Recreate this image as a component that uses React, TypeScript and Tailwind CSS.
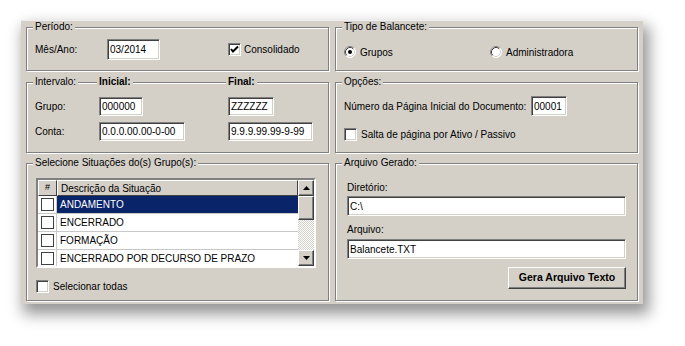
import React from "react";

const BG = "bg-[#d4d0c8]";

function GroupBox({
  label,
  className = "",
  children,
  extra,
}: {
  label: string;
  className?: string;
  children?: React.ReactNode;
  extra?: React.ReactNode;
}) {
  return (
    <div
      className={`relative border border-[#808080] shadow-[inset_1px_1px_0_#fff,1px_1px_0_#fff] ${className}`}
    >
      <span className="absolute left-[6px] top-[-7px] bg-[#d4d0c8] px-[2px] leading-[12px] whitespace-nowrap">
        {label}
      </span>
      {extra}
      {children}
    </div>
  );
}

function Field({ value, className = "" }: { value: string; className?: string }) {
  return (
    <div
      className={`bg-white border border-[#808080] border-b-white border-r-white shadow-[inset_1px_1px_0_#404040,inset_-1px_-1px_0_#d4d0c8] pl-[2px] flex items-center whitespace-nowrap overflow-hidden ${className}`}
    >
      {value}
    </div>
  );
}

function Check({ checked = false, flat = false }: { checked?: boolean; flat?: boolean }) {
  return (
    <div
      className={
        flat
          ? "w-[13px] h-[13px] bg-white border border-[#404040] shrink-0"
          : "w-[13px] h-[13px] bg-white border border-[#808080] border-b-white border-r-white shadow-[inset_1px_1px_0_#404040,inset_-1px_-1px_0_#d4d0c8] shrink-0 flex items-center justify-center"
      }
    >
      {checked && (
        <svg width="11" height="11" viewBox="0 0 11 11">
          <polyline points="2,5 4,7.5 9,2.5" fill="none" stroke="#000" strokeWidth="2" />
        </svg>
      )}
    </div>
  );
}

function Radio({ checked = false }: { checked?: boolean }) {
  return (
    <svg width="12" height="12" viewBox="0 0 12 12" className="shrink-0">
      <circle cx="6" cy="6" r="5.5" fill="#fff" />
      <path d="M2.11 9.89 A5.5 5.5 0 0 1 9.89 2.11" fill="none" stroke="#808080" strokeWidth="1" />
      <path d="M9.89 2.11 A5.5 5.5 0 0 1 2.11 9.89" fill="none" stroke="#fff" strokeWidth="1" />
      <path d="M2.82 9.18 A4.5 4.5 0 0 1 9.18 2.82" fill="none" stroke="#404040" strokeWidth="1" />
      <path d="M9.18 2.82 A4.5 4.5 0 0 1 2.82 9.18" fill="none" stroke="#d4d0c8" strokeWidth="1" />
      {checked && <circle cx="6" cy="6" r="2" fill="#000" />}
    </svg>
  );
}

function ScrollBtn({ up }: { up: boolean }) {
  return (
    <div className="w-[16px] h-[16px] bg-[#d4d0c8] border border-t-white border-l-white border-r-[#404040] border-b-[#404040] shadow-[inset_-1px_-1px_0_#808080] flex items-center justify-center shrink-0">
      <svg width="7" height="4" viewBox="0 0 7 4">
        {up ? <polygon points="3.5,0 7,4 0,4" fill="#000" /> : <polygon points="0,0 7,0 3.5,4" fill="#000" />}
      </svg>
    </div>
  );
}

const rows = ["ANDAMENTO", "ENCERRADO", "FORMAÇÃO", "ENCERRADO POR DECURSO DE PRAZO"];

export default function App() {
  return (
    <div className="w-[685px] h-[346px] bg-white pt-[20px] pl-[21px] font-['Liberation_Sans',Arial,sans-serif] text-[10px] text-black">
      <div
        className={`w-[622px] h-[284px] ${BG} shadow-[4px_8px_14px_2px_rgba(0,0,0,0.42)] border-t border-t-[#eeeeee] px-[5px] pt-[6px] grid grid-cols-[303px_303px] gap-x-[6px] content-start`}
      >
        {/* Row 1 */}
        <GroupBox label="Período:" className="h-[44px]">
          <div className="flex items-center h-[21px] mt-[11px] pl-[8px]">
            <span className="w-[72px]">Mês/Ano:</span>
            <Field value="03/2014" className="w-[53px] h-[21px]" />
            <div className="ml-[68px] flex items-center">
              <Check checked />
              <span className="ml-[3px]">Consolidado</span>
            </div>
          </div>
        </GroupBox>
        <GroupBox label="Tipo de Balancete:" className="h-[44px]">
          <div className="flex items-center h-[14px] mt-[17px] pl-[8px]">
            <div className="flex items-center w-[146px]">
              <Radio checked />
              <span className="ml-[4px]">Grupos</span>
            </div>
            <div className="flex items-center">
              <Radio />
              <span className="ml-[4px]">Administradora</span>
            </div>
          </div>
        </GroupBox>

        {/* Row 2 */}
        <GroupBox
          label="Intervalo:"
          className="h-[71px] mt-[11px]"
          extra={
            <>
              <span className="absolute left-[70px] top-[-7px] bg-[#d4d0c8] px-[2px] leading-[12px] font-bold">
                Inicial:
              </span>
              <span className="absolute left-[199px] top-[-7px] bg-[#d4d0c8] px-[2px] leading-[12px] font-bold">
                Final:
              </span>
            </>
          }
        >
          <div className="grid grid-cols-[64px_129px_1fr] gap-y-[6px] items-center mt-[14px] pl-[8px]">
            <span>Grupo:</span>
            <Field value="000000" className="w-[44px] h-[19px]" />
            <Field value="ZZZZZZ" className="w-[46px] h-[19px]" />
            <span>Conta:</span>
            <Field value="0.0.0.00.00-0-00" className="w-[86px] h-[19px]" />
            <Field value="9.9.9.99.99-9-99" className="w-[85px] h-[19px]" />
          </div>
        </GroupBox>
        <GroupBox label="Opções:" className="h-[71px] mt-[11px]">
          <div className="flex items-center mt-[13px] pl-[8px] h-[20px]">
            <span className="w-[187px] whitespace-nowrap">Número da Página Inicial do Documento:</span>
            <Field value="00001" className="w-[36px] h-[20px]" />
          </div>
          <div className="flex items-center mt-[12px] pl-[8px] h-[13px]">
            <Check />
            <span className="ml-[4px]">Salta de página por Ativo / Passivo</span>
          </div>
        </GroupBox>

        {/* Row 3 */}
        <GroupBox label="Selecione Situações do(s) Grupo(s):" className="h-[138px] mt-[10px]">
          <div className="mt-[14px] ml-[9px] w-[280px] h-[90px] border-2 border-t-[#808080] border-l-[#808080] border-b-white border-r-white shadow-[inset_1px_1px_0_#404040] flex overflow-hidden">
            <div className="flex-1 flex flex-col bg-white overflow-hidden">
              <div className="flex h-[16px] shrink-0 bg-[#d4d0c8]">
                <div className="w-[19px] flex items-center justify-center border border-t-white border-l-white border-r-[#404040] border-b-[#404040] text-[9px]">
                  #
                </div>
                <div className="flex-1 flex items-center pl-[3px] border border-t-white border-l-white border-r-[#404040] border-b-[#404040]">
                  Descrição da Situação
                </div>
              </div>
              {rows.map((r, i) => (
                <div key={r} className="flex h-[18px] shrink-0 border-b border-[#c8c8c8]">
                  <div className="w-[19px] flex items-center justify-center border-r border-[#c8c8c8] bg-white">
                    <Check flat />
                  </div>
                  <div
                    className={
                      i === 0
                        ? "flex-1 flex items-center pl-[3px] bg-[#0a246a] text-white"
                        : "flex-1 flex items-center pl-[3px]"
                    }
                  >
                    {r}
                  </div>
                </div>
              ))}
            </div>
            <div className="w-[16px] flex flex-col">
              <ScrollBtn up />
              <div className="h-[24px] shrink-0 bg-[#d4d0c8] border border-t-white border-l-white border-r-[#404040] border-b-[#404040] shadow-[inset_-1px_-1px_0_#808080]" />
              <div className="flex-1 bg-[repeating-conic-gradient(#ffffff_0_25%,#d4d0c8_0_50%)] bg-[length:2px_2px]" />
              <ScrollBtn up={false} />
            </div>
          </div>
          <div className="flex items-center mt-[12px] ml-[9px] h-[13px]">
            <Check />
            <span className="ml-[4px]">Selecionar todas</span>
          </div>
        </GroupBox>
        <GroupBox label="Arquivo Gerado:" className="h-[138px] mt-[10px]">
          <div className="flex flex-col pl-[11px] pr-[11px]">
            <span className="mt-[18px] leading-[12px]">Diretório:</span>
            <Field value="C:\" className="mt-[2px] h-[20px] w-full" />
            <span className="mt-[8px] leading-[12px]">Arquivo:</span>
            <Field value="Balancete.TXT" className="mt-[3px] h-[20px] w-full" />
            <div className="flex justify-end mt-[8px]">
              <div className="w-[118px] h-[22px] flex items-center justify-center font-bold text-[10.5px] bg-[#d4d0c8] border border-t-white border-l-white border-r-[#404040] border-b-[#404040] shadow-[inset_-1px_-1px_0_#808080]">
                Gera Arquivo Texto
              </div>
            </div>
          </div>
        </GroupBox>
      </div>
    </div>
  );
}
